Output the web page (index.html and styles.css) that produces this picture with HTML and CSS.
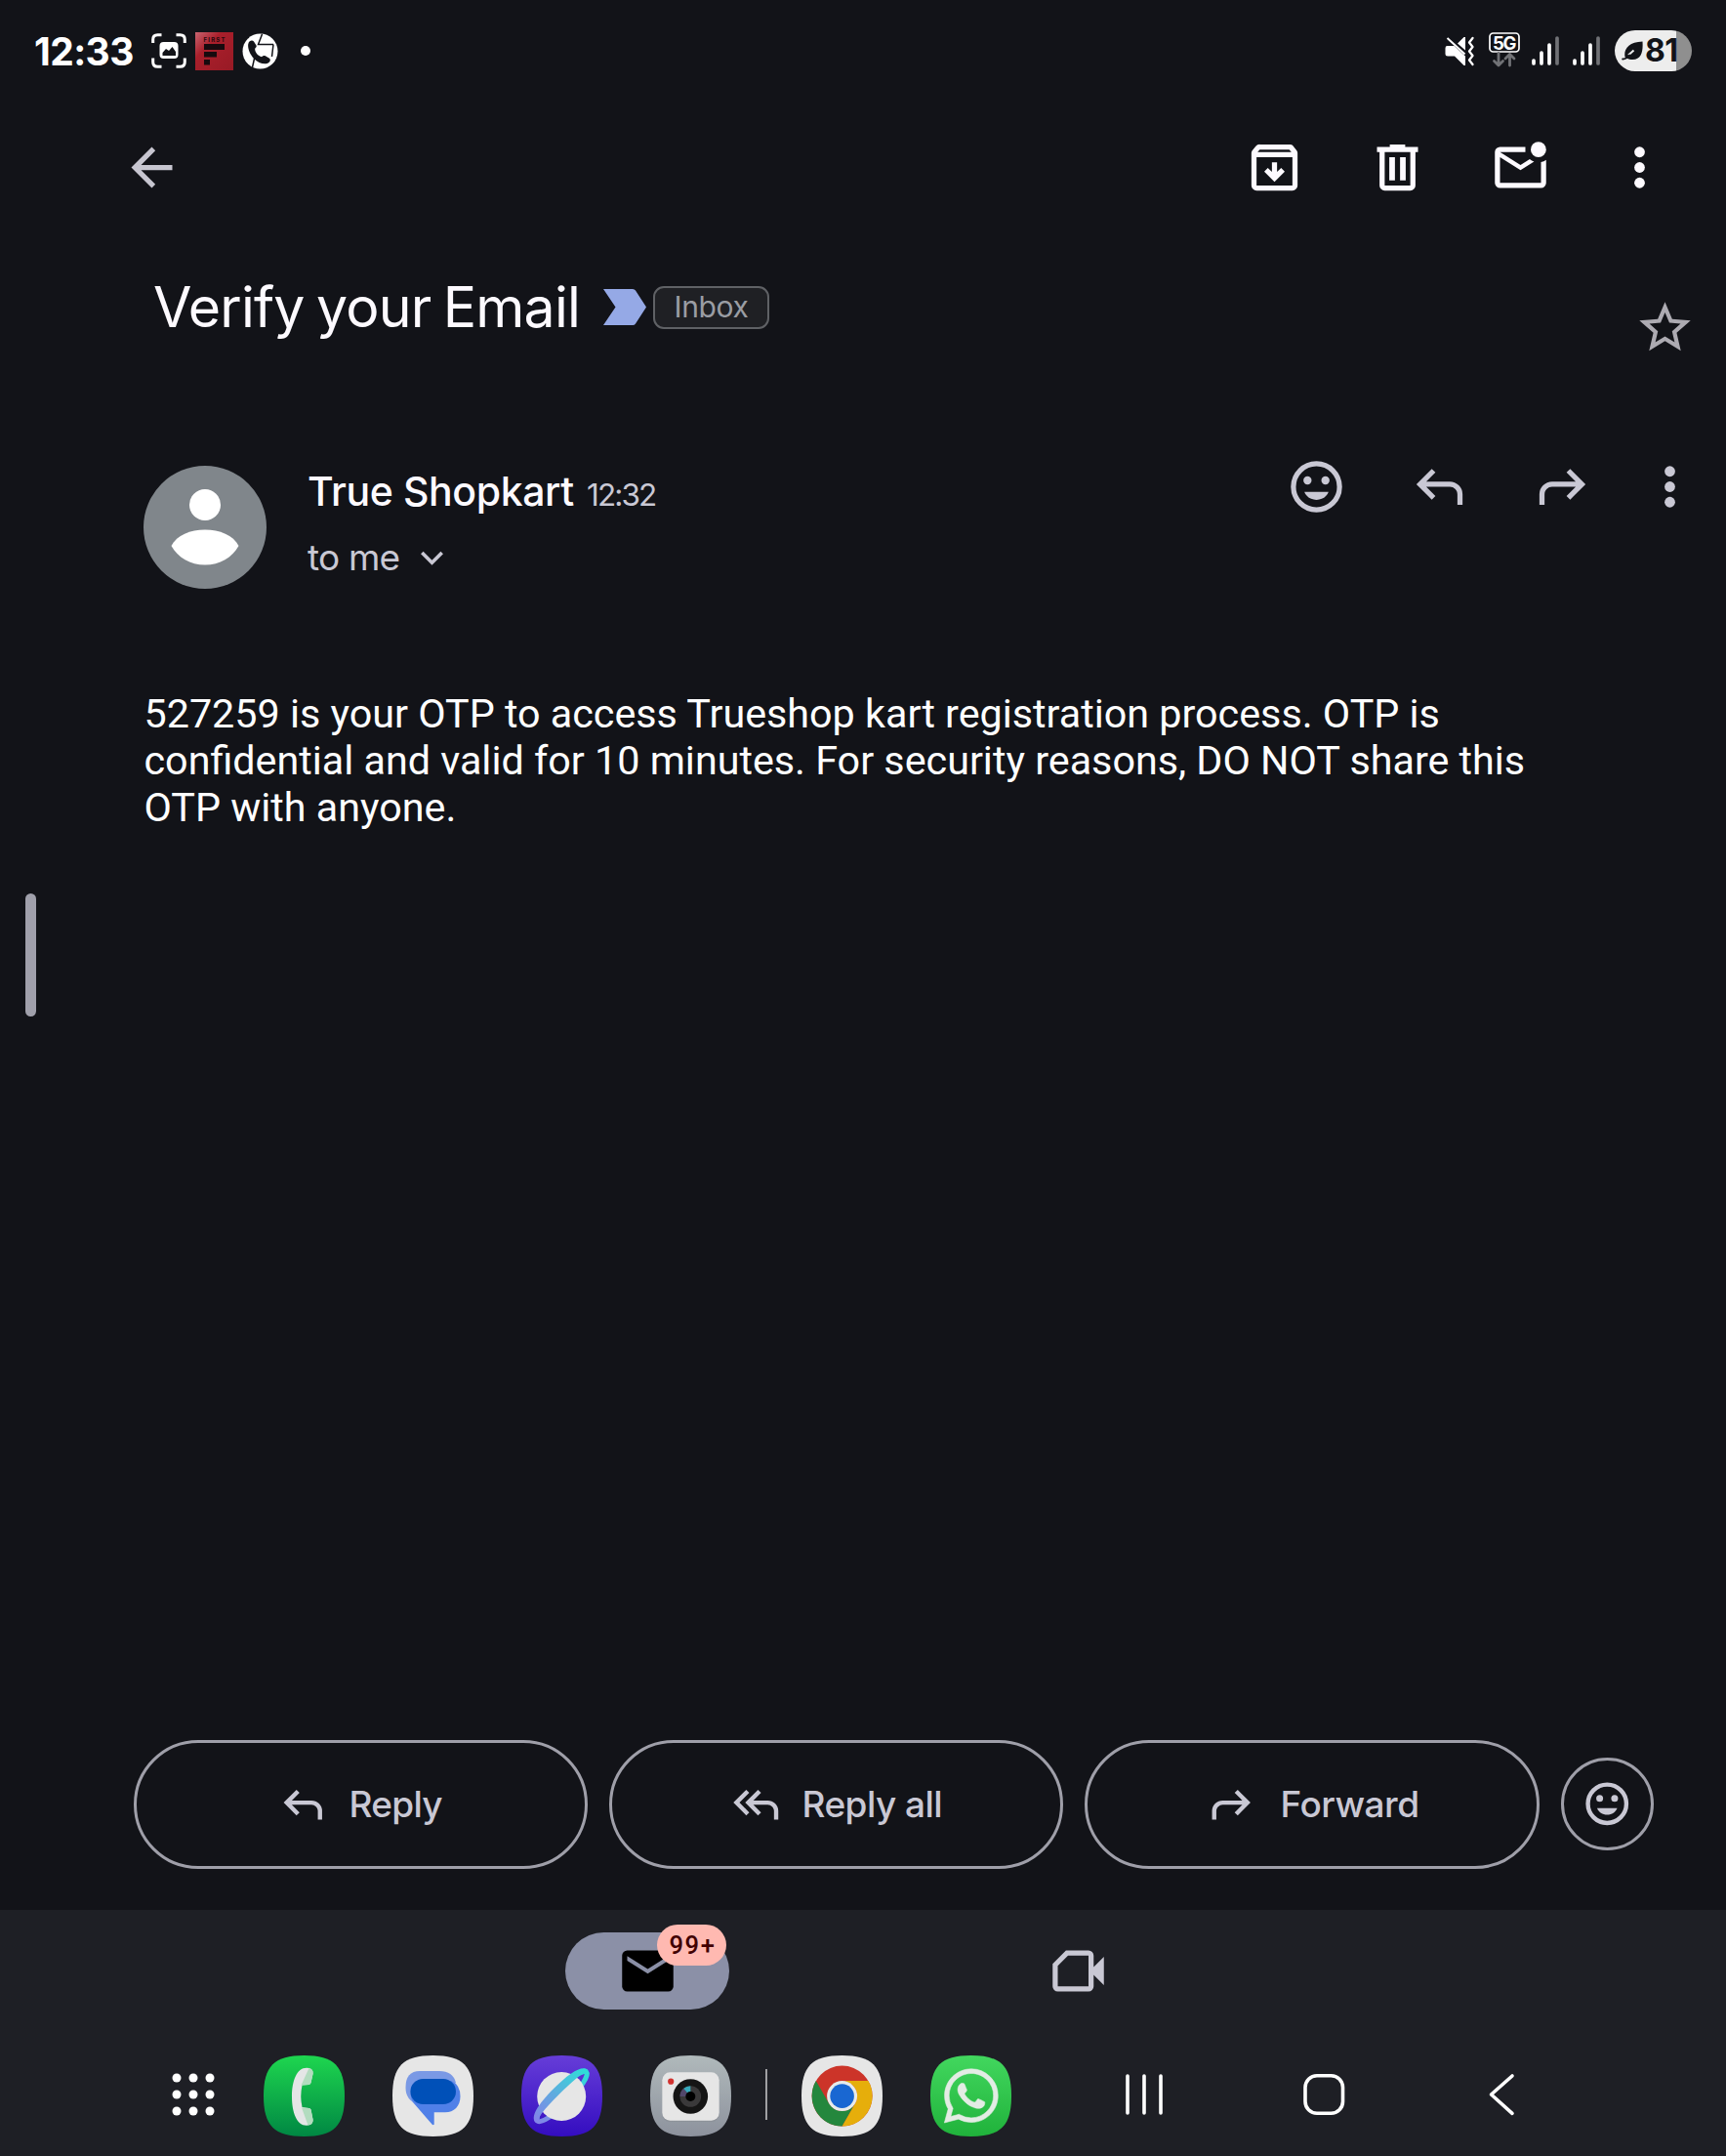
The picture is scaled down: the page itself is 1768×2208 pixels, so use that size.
FILE: index.html
```html
<!DOCTYPE html>
<html lang="en">
<head>
<meta charset="utf-8">
<title>Verify your Email</title>
<link rel="stylesheet" href="styles.css">
</head>
<body>
<svg class="defs" aria-hidden="true">
  <defs>
    <symbol id="i-reply" viewBox="0 0 24 24"><path d="M19 19v-4c0-.83-.29-1.54-.88-2.13A2.9 2.9 0 0 0 16 12H6.83l3.6 3.6L9 17l-6-6 6-6 1.43 1.4L6.83 10H16c1.38 0 2.56.49 3.54 1.46A4.82 4.82 0 0 1 21 15v4z"/></symbol>
    <symbol id="i-forward" viewBox="0 0 24 24"><path transform="matrix(-1 0 0 1 24 0)" d="M19 19v-4c0-.83-.29-1.54-.88-2.13A2.9 2.9 0 0 0 16 12H6.83l3.6 3.6L9 17l-6-6 6-6 1.43 1.4L6.83 10H16c1.38 0 2.56.49 3.54 1.46A4.82 4.82 0 0 1 21 15v4z"/></symbol>
    <symbol id="i-smile" viewBox="0 0 24 24"><circle cx="12" cy="12" r="9" fill="none" stroke="currentColor" stroke-width="2"/><circle cx="8.5" cy="9.5" r="1.6"/><circle cx="15.5" cy="9.5" r="1.6"/><path d="M7.3 14h9.4c-.7 1.9-2.5 3.1-4.7 3.1S8 15.9 7.3 14z"/></symbol>
    <symbol id="i-more" viewBox="0 0 24 24"><circle cx="12" cy="6" r="2.05"/><circle cx="12" cy="12" r="2.05"/><circle cx="12" cy="18" r="2.05"/></symbol>
    <symbol id="squircle" viewBox="0 0 83 83"><path d="M41.5 0C72 0 83 11 83 41.5S72 83 41.5 83 0 72 0 41.5 11 0 41.5 0Z"/></symbol>
    <linearGradient id="g-phone" x1="0" y1="0" x2="0" y2="1"><stop offset="0" stop-color="#1ed64f"/><stop offset="1" stop-color="#008743"/></linearGradient>
    <linearGradient id="g-net" x1="0" y1="0" x2="0" y2="1"><stop offset="0" stop-color="#663dd8"/><stop offset="1" stop-color="#340dc0"/></linearGradient>
    <linearGradient id="g-ring" gradientUnits="userSpaceOnUse" x1="76" y1="0" x2="6" y2="0"><stop offset="0" stop-color="#2fdcd8"/><stop offset=".5" stop-color="#5bb0de"/><stop offset="1" stop-color="#8284e8"/></linearGradient>
    <linearGradient id="g-cam" x1="0" y1="0" x2="0" y2="1"><stop offset="0" stop-color="#b0b9bb"/><stop offset="1" stop-color="#8d929d"/></linearGradient>
    <linearGradient id="g-wa" x1="0" y1="0" x2="0" y2="1"><stop offset="0" stop-color="#42d75e"/><stop offset="1" stop-color="#20b23b"/></linearGradient>
    <linearGradient id="g-red" x1="0" y1="0" x2="1" y2="1"><stop offset="0" stop-color="#c96470"/><stop offset=".35" stop-color="#a91f2b"/><stop offset="1" stop-color="#981a25"/></linearGradient>
  </defs>
</svg>

<div class="screen">
  <header class="status">
    <span class="clock">12:33</span>
    <svg class="s-shot" viewBox="0 0 36 36"><g fill="none" stroke="#fff" stroke-width="3" stroke-linecap="butt"><path d="M1.7 10V6.500Q1.700 1.700 6.500 1.700H10.500M25.500 1.700H29.500Q34.300 1.700 34.300 6.500V10M34.300 25.500V29.500Q34.300 34.300 29.500 34.300H25.500M10.500 34.300H6.500Q1.700 34.300 1.700 29.500V25.500"/></g><rect x="8.500" y="9" width="19" height="17" rx="4" fill="#fff"/><path d="M11.500 23v-3l3.500-4 3 2 3.500-4 3.500 5v4z" fill="#121318"/></svg>
    <svg class="s-first" viewBox="0 0 39 39"><path fill="url(#g-red)" d="M0 0h39v39H0z"/><text x="8.500" y="9.500" textLength="22">FIRST</text><path fill="#170a0e" d="M9 12h21v6H9zM9 20h13v5.500H9zM9 28h6v5.500H9z"/></svg>
    <svg class="s-call" viewBox="0 0 37 37"><circle cx="18.500" cy="18.500" r="18" fill="#fff"/><path d="M20.500 1l-4 10.500H32M32 11.500L30.500 24M12.500 26L10.500 35" fill="none" stroke="#121318" stroke-width="1.500"/><path d="M7.500 8.500c1.800-1.500 3.500-1.300 4.500 0l2.500 4c.6 1.200-.2 2.300-1.300 3.200-.4 3.500 3 7.600 6.800 8.600 1.300-1.300 2.600-1.800 3.800-1.100l4.200 2.600c1.200.9 1 2.600-.3 3.900-3.500 3.300-10.700 1.300-15.700-3.800S4.300 12 7.500 8.500z" fill="#121318"/></svg>
    <i class="s-dot"></i>
    <div class="status-right">
      <svg class="s-mute" viewBox="0 0 31 31"><path fill="#fff" d="M2 10h7.500L21 20.500V30h-1.500L10 20.500H3Q.5 20.500.5 18v-5.500Q.5 10 2 10zM13 7.500L19.500 1H21v13.500z"/><path d="M2.500 2l18 16.500" stroke="#fff" stroke-width="2"/><path d="M28.500 2l-3.500 4.500 3.500 4.500-3.500 4.500 3.500 4.500-3.500 4.500 3.500 4.500" fill="none" stroke="#fff" stroke-width="2.300" stroke-linecap="round" stroke-linejoin="round"/></svg>
      <svg class="s-5g" viewBox="0 0 32 36"><rect x="1" y="1" width="30" height="19" rx="3.500" fill="none" stroke="#fff" stroke-width="1.700"/><text x="4" y="17.500" textLength="24.500">5G</text><path d="M10 21.500v12M5.500 29.500l4.500 4.500 4.500-4.500M21.500 34v-11M17 27l4.500-4.500 4.500 4.500" fill="none" stroke="#717276" stroke-width="2.800" stroke-linecap="round" stroke-linejoin="round"/></svg>
      <svg class="s-sig" viewBox="0 0 28 30"><path d="M2 25v3M10 17v11M18 9v19" stroke="#fff" stroke-width="3.700" stroke-linecap="round"/><path d="M26 2v26" stroke="#717276" stroke-width="3.700" stroke-linecap="round"/></svg>
      <svg class="s-sig" viewBox="0 0 28 30"><path d="M2 25v3M10 17v11M18 9v19" stroke="#fff" stroke-width="3.700" stroke-linecap="round"/><path d="M26 2v26" stroke="#717276" stroke-width="3.700" stroke-linecap="round"/></svg>
      <div class="battery"><svg viewBox="0 0 22 20"><path d="M3.500 16.500C2 8.500 7 1 21.500.5c.7 10-1 18.500-10 18.500-2.500 0-4.500-.3-6-1.500z" fill="#121318"/><path d="M12.500 9.500L7 14.500" stroke="#ededed" stroke-width="2"/><path d="M1.200 18.500c3 0 5-1.500 7-4" stroke="#121318" stroke-width="2" fill="none" stroke-linecap="round"/></svg><span>81</span></div>
    </div>
  </header>

  <nav class="toolbar">
    <svg class="ic back" viewBox="0 0 24 24"><path d="M4 12l8-8 1.400 1.400L7.830 11H20v2H7.830l5.570 5.600L12 20z"/></svg>
    <div class="tools">
      <span><svg class="ic" viewBox="0 0 24 24"><path d="M12 17.600l4-4-1.400-1.400-1.600 1.550V10h-2v3.750L9.400 12.200 8 13.600zM5 8v11h14V8zM5 21a2 2 0 0 1-2-2V6.530c0-.24.04-.47.110-.68.080-.21.190-.41.340-.59L4.700 3.730A1.900 1.900 0 0 1 6.250 3h11.500c.32 0 .61.060.890.190.280.130.510.310.710.540l1.200 1.520c.150.180.26.380.34.59.070.21.110.44.110.68V19a2 2 0 0 1-2 2zM5.400 6h13.200l-.85-1H6.250z"/></svg></span>
      <span><svg class="ic" viewBox="0 0 24 24"><path d="M7 21a2 2 0 0 1-2-2V6H4V4h5V3h6v1h5v2h-1v13a2 2 0 0 1-2 2zM17 6H7v13h10zM8.800 17h2.200V8H8.800zM13 17h2.200V8H13z"/></svg></span>
      <span><svg class="ic" viewBox="0 0 24 24"><path d="M4 20a2 2 0 0 1-2-2V6a2 2 0 0 1 2-2h9.900v2H4l8 5 3.600-2.250a5.300 5.300 0 0 0 1.700 1L12 13 4 8v10h16V9.900a4.800 4.800 0 0 0 2-.9v9a2 2 0 0 1-2 2z"/><circle cx="19" cy="5" r="3"/></svg></span>
      <span class="last"><svg class="ic" viewBox="0 0 24 24"><use href="#i-more"/></svg></span>
    </div>
  </nav>

  <section class="subject">
    <h1>Verify your Email</h1>
    <svg class="important" viewBox="0 0 44 37"><path d="M0 0H30Q32 0 33 1.500L44 18.500 33 35.500Q32 37 30 37H0L12.500 18.500z"/></svg>
    <span class="chip">Inbox</span>
    <svg class="ic star" viewBox="0 0 24 24"><path d="M22 9.240l-7.190-.62L12 2 9.190 8.630 2 9.240l5.460 4.730L5.820 21 12 17.270 18.180 21l-1.630-7.030zM12 15.400l-3.760 2.270 1-4.280-3.320-2.880 4.380-.38L12 6.100l1.710 4.040 4.380.38-3.320 2.880 1 4.280z"/></svg>
  </section>

  <section class="sender">
    <svg class="avatar" viewBox="0 0 126 126"><circle cx="63" cy="63" r="63" fill="#80868b"/><circle cx="63" cy="40" r="16" fill="#fff"/><path d="M28.500 82C34 71 48 65.500 63 65.500S92 71 97.500 82C91 94 78 101.500 63 101.500S35 94 28.500 82z" fill="#fff"/></svg>
    <div class="who">
      <div class="name-row"><b>True Shopkart</b><time>12:32</time></div>
      <div class="to-row"><span>to me</span><svg viewBox="0 0 23 15"><path d="M1.300 2l10.200 10.200L21.700 2" fill="none" stroke="currentColor" stroke-width="3.600"/></svg></div>
    </div>
    <div class="msg-tools">
      <span><svg class="ic" viewBox="0 0 24 24"><use href="#i-smile"/></svg></span>
      <span><svg class="ic" viewBox="0 0 24 24"><use href="#i-reply"/></svg></span>
      <span><svg class="ic" viewBox="0 0 24 24"><use href="#i-forward"/></svg></span>
      <span class="last"><svg class="ic" viewBox="0 0 24 24"><use href="#i-more"/></svg></span>
    </div>
  </section>

  <main class="message">527259 is your OTP to access Trueshop kart registration process. OTP is<br>confidential and valid for 10 minutes. For security reasons, DO NOT share this<br>OTP with anyone.</main>
  <div class="edge-handle"></div>

  <div class="actions">
    <button class="pill"><svg class="ic sm" viewBox="0 0 24 24"><use href="#i-reply"/></svg><span>Reply</span></button>
    <button class="pill all"><svg class="ic sm" viewBox="0 0 24 24"><path d="M7.500 17l-6-6 6-6 1.400 1.400L4.330 11l4.570 4.600zM20.500 19v-4c0-.83-.29-1.540-.88-2.130A2.900 2.900 0 0 0 17.500 12H10.830l3.600 3.600L13 17l-6-6 6-6 1.430 1.400L10.830 10h6.670c1.380 0 2.560.49 3.540 1.460A4.820 4.820 0 0 1 22.500 15v4z"/></svg><span>Reply all</span></button>
    <button class="pill fwd"><svg class="ic sm" viewBox="0 0 24 24"><use href="#i-forward"/></svg><span>Forward</span></button>
    <button class="react"><svg class="ic sm" viewBox="0 0 24 24"><use href="#i-smile"/></svg></button>
  </div>

  <footer class="bottom">
    <div class="tabs">
      <div class="tab-mail"><svg class="ic" viewBox="0 0 24 24"><path fill="#000" d="M4 4h16a2 2 0 0 1 2 2v12a2 2 0 0 1-2 2H4a2 2 0 0 1-2-2V6a2 2 0 0 1 2-2z"/><path fill="#8b90a7" d="M4 6.200l8 5 8-5V8l-8 5-8-5z"/></svg><span class="badge">99+</span></div>
      <svg class="ic meet" viewBox="0 0 24 24"><path fill-rule="evenodd" d="M7.200 4H16a2 2 0 0 1 2 2v4.500l4-4v11l-4-4V18a2 2 0 0 1-2 2H4a2 2 0 0 1-2-2V9.200zM8 6L4 10v8h12V6z"/></svg>
    </div>
    <div class="taskbar">
      <svg class="apps" viewBox="0 0 44 44"><circle cx="5" cy="5" r="4.500"/><circle cx="22" cy="5" r="4.500"/><circle cx="39" cy="5" r="4.500"/><circle cx="5" cy="22" r="4.500"/><circle cx="22" cy="22" r="4.500"/><circle cx="39" cy="22" r="4.500"/><circle cx="5" cy="39" r="4.500"/><circle cx="22" cy="39" r="4.500"/><circle cx="39" cy="39" r="4.500"/></svg>
      <svg class="app a1" viewBox="0 0 83 83"><use href="#squircle" fill="url(#g-phone)"/><path fill="#e5e6e6" d="M44 12.700C34 12.700 29 26 29 42.200S34 71.700 44 71.700Q51 71.700 50.600 66L48.500 55.500Q48 54 46.500 54L39.500 53Q37 42 39.500 30.500L46.500 30Q48 29.500 48.500 28L50.600 18.500Q51 12.700 44 12.700z"/><path fill="#b3dcbf" d="M46.500 13Q51 14 50.600 18.500L48.500 28Q48 29.500 46.500 30L38.500 30.500zM39 53.500L46.500 54Q48 54 48.500 55.500L50.600 66Q50.500 70.500 45.500 71.500z"/></svg>
      <svg class="app a2" viewBox="0 0 83 83"><use href="#squircle" fill="#e6e6e6"/><path fill="#7a99e5" d="M28 16H48Q62 16 65 28L26 50Q13.500 46 13.500 33Q13.500 16 28 16z"/><path fill="#5080e8" d="M60 26Q69.500 30 69.500 42C69.500 52 63 58.300 54 58.300H42.700V70.500Q42 72 40.500 70.500L21 48Q18 42 19 38z"/><rect x="18.400" y="24" width="46.600" height="26" rx="13" fill="#0050b8"/></svg>
      <svg class="app a3" viewBox="0 0 83 83"><use href="#squircle" fill="url(#g-net)"/><ellipse cx="41.500" cy="42" rx="35.500" ry="8" transform="rotate(-45 41.500 42)" fill="none" stroke="url(#g-ring)" stroke-width="5"/><circle cx="41.200" cy="42" r="25" fill="#e6e6e6"/><path transform="rotate(-45 41.500 42)" d="M3.500 42C3.500 34 18 30.500 41.500 30.500S79.500 34 79.500 42H73.500C73.500 39.500 60 38.500 41.500 38.500S9.500 39.500 9.500 42z" fill="url(#g-ring)"/></svg>
      <svg class="app a4" viewBox="0 0 83 83"><use href="#squircle" fill="url(#g-cam)"/><rect x="12.300" y="18" width="58.400" height="50" rx="8" fill="#888c92" opacity=".5"/><rect x="12.300" y="17.300" width="58.400" height="49.400" rx="8" fill="#e6e6e6"/><circle cx="41.300" cy="42" r="17.800" fill="#151515"/><circle cx="41.300" cy="42" r="10.800" fill="#3a393a"/><path d="M41.300 31.200A10.800 10.800 0 0 0 34 34L41.300 42z" fill="#36a9bb"/><path d="M34 34A10.800 10.800 0 0 0 30.500 42H41.300z" fill="#51476a"/><circle cx="41.300" cy="42" r="5" fill="#000"/><circle cx="21.200" cy="26.700" r="3.100" fill="#d2322f"/></svg>
      <i class="divider"></i>
      <svg class="app a5" viewBox="0 0 83 83"><use href="#squircle" fill="#e6e6e6"/><circle cx="41.600" cy="41.600" r="31" fill="#cc3429"/><path fill="#24873d" d="M14.800 26.100L28.200 49.350A15.500 15.500 0 0 0 55 49.350L41.600 72.600A31 31 0 0 1 14.800 26.100z"/><path fill="#e6ae0b" d="M68.400 26.100H41.600A15.500 15.500 0 0 1 55 49.350L41.600 72.600A31 31 0 0 0 68.400 26.100z"/><circle cx="41.600" cy="41.600" r="15.500" fill="#e8ebea"/><circle cx="41.600" cy="41.600" r="12.300" fill="#1967d2"/></svg>
      <svg class="app a6" viewBox="0 0 83 83"><use href="#squircle" fill="url(#g-wa)"/><path transform="translate(14.200 13.800) scale(2.300)" fill="#e3ece4" stroke="#e3ece4" stroke-width=".25" d="M17.472 14.382c-.297-.149-1.758-.867-2.030-.967-.273-.099-.471-.148-.67.150-.197.297-.767.966-.940 1.164-.173.199-.347.223-.644.075-.297-.150-1.255-.463-2.390-1.475-.883-.788-1.480-1.761-1.653-2.059-.173-.297-.018-.458.130-.606.134-.133.298-.347.446-.520.149-.174.198-.298.298-.497.099-.198.050-.371-.025-.520-.075-.149-.669-1.612-.916-2.207-.242-.579-.487-.5-.669-.510-.173-.008-.371-.010-.570-.010-.198 0-.520.074-.792.372-.272.297-1.040 1.016-1.040 2.479 0 1.462 1.065 2.875 1.213 3.074.149.198 2.096 3.200 5.077 4.487.709.306 1.262.489 1.694.625.712.227 1.360.195 1.871.118.571-.085 1.758-.719 2.006-1.413.248-.694.248-1.289.173-1.413-.074-.124-.272-.198-.570-.347m-5.421 7.403h-.004a9.870 9.870 0 0 1-5.031-1.378l-.361-.214-3.741.982.998-3.648-.235-.374a9.860 9.860 0 0 1-1.510-5.260c.001-5.450 4.436-9.884 9.888-9.884 2.640 0 5.122 1.030 6.988 2.898a9.825 9.825 0 0 1 2.893 6.994c-.003 5.450-4.437 9.884-9.885 9.884m8.413-18.297A11.815 11.815 0 0 0 12.050 0C5.495 0 .160 5.335.157 11.892c0 2.096.547 4.142 1.588 5.945L.057 24l6.305-1.654a11.882 11.882 0 0 0 5.683 1.448h.005c6.554 0 11.890-5.335 11.893-11.893a11.821 11.821 0 0 0-3.480-8.413z"/></svg>
      <svg class="recents" viewBox="0 0 40 42"><path d="M3 2v38M20 2v38M37 2v38" stroke="#fff" stroke-width="3.600" stroke-linecap="round"/></svg>
      <svg class="home" viewBox="0 0 44 44"><rect x="3" y="2.800" width="38.500" height="38.500" rx="12" fill="none" stroke="#fff" stroke-width="3.600"/></svg>
      <svg class="sysback" viewBox="0 0 28 44"><path d="M25 3L3.500 22 25 41.300" fill="none" stroke="#fff" stroke-width="3.600" stroke-linecap="round" stroke-linejoin="round"/></svg>
    </div>
  </footer>
</div>
</body>
</html>
```
FILE: styles.css
```css
* { box-sizing: border-box; }
body { margin: 0; background: #121318; }
.defs { position: absolute; width: 0; height: 0; }
svg { display: block; flex: none; fill: currentColor; }
.screen {
  position: relative;
  display: flex;
  flex-direction: column;
  width: 1768px;
  height: 2208px;
  overflow: hidden;
  color: #c9c8d4;
  font-family: Inter, "Open Sans", sans-serif;
}
.ic { width: 63px; height: 63px; }
.ic.sm { width: 52.5px; height: 52.5px; }

/* status bar */
.status { display: flex; align-items: center; height: 104px; padding: 0 35px 0 35px; }
.clock { width: 120px; color: #fff; font-size: 39px; font-weight: 700; letter-spacing: -0.6px; line-height: 1; white-space: nowrap; }
.s-shot { width: 36px; height: 36px; }
.s-first { width: 39px; height: 39px; margin-left: 9px; }
.s-first text { fill: #26090e; font: 700 6px Inter, sans-serif; }
.s-call { width: 37px; height: 37px; margin-left: 9px; }
.s-dot { width: 10px; height: 10px; margin-left: 23px; border-radius: 50%; background: #fff; }
.status-right { display: flex; align-items: center; margin-left: auto; }
.s-mute { width: 31px; height: 31px; }
.s-5g { width: 32px; height: 36px; margin: -2px 0 0 14px; }
.s-5g text { fill: #fff; font: 700 18.5px Inter, sans-serif; }
.s-sig { width: 28px; height: 30px; margin-left: 12px; }
.s-sig + .s-sig { margin-left: 14px; }
.battery {
  display: flex;
  align-items: center;
  width: 79px;
  height: 42px;
  margin-left: 15px;
  padding-left: 7px;
  border-radius: 21px;
  background: linear-gradient(90deg, #ededed 63px, #8f8f8f 63px);
  color: #121318;
}
.battery svg { width: 22px; height: 20px; }
.battery span { margin-left: 2px; font-size: 32px; font-weight: 700; letter-spacing: -0.5px; line-height: 42px; }

/* toolbar */
.toolbar { display: flex; align-items: center; justify-content: space-between; height: 136px; padding: 0 30px 1px 123.5px; }
.back { color: #c7c6d0; }
.tools, .msg-tools { display: flex; color: #fdfaff; }
.tools span, .msg-tools span { display: flex; justify-content: center; width: 126px; }
.tools .last { width: 118px; }

/* subject */
.subject { display: flex; align-items: center; height: 150px; padding: 0 31px 0 157px; }
.subject h1 { width: 461px; margin: 0 0 1px; color: #fdfaff; font-size: 57.200px; font-weight: 400; letter-spacing: -0.8px; word-spacing: -3px; line-height: 70px; white-space: nowrap; }
.important { width: 44px; height: 37px; margin-top: -1px; color: #95a9e6; }
.chip {
  width: 119px;
  height: 44px;
  margin-left: 7px;
  border: 2px solid #5f6165;
  border-radius: 11px;
  background: #1f2024;
  color: #9a9da3;
  font-size: 30px;
  letter-spacing: -0.4px;
  line-height: 39px;
  text-align: center;
}
.star { margin: 41px 0 0 auto; color: #adabb2; }

/* sender */
.sender { display: flex; height: 213px; margin-top: 87px; padding: 0 0 0 147px; }
.avatar { width: 126px; height: 126px; }
.who { margin-left: 42px; }
.name-row { display: flex; align-items: baseline; height: 69px; line-height: 52px; white-space: nowrap; }
.name-row b { width: 286px; color: #fdfaff; font-size: 41px; font-weight: 500; letter-spacing: -0.4px; }
.name-row time { font-size: 31.5px; letter-spacing: -1.9px; }
.to-row { display: flex; align-items: center; font-size: 37px; letter-spacing: -0.8px; line-height: 50px; }
.to-row span { width: 116px; }
.to-row svg { width: 23px; height: 15px; }
.msg-tools { margin: -10px 0 0 auto; padding-right: 10px; color: #c9c8d4; }
.msg-tools .last { width: 95px; }

/* message */
.message { padding: 17px 0 0 147.500px; color: #fff; font: 400 41.280px/48px Roboto, sans-serif; white-space: nowrap; }
.edge-handle { position: absolute; left: 26px; top: 915px; width: 11px; height: 126px; border-radius: 5.500px; background: #a0a0ab; }

/* reply actions */
.actions { display: flex; align-items: center; gap: 22px; height: 132px; margin: auto 0 42px 137px; }
.pill, .react { display: flex; align-items: center; padding: 0; border: 3px solid #9f9fa9; background: none; color: inherit; font-family: inherit; }
.pill { width: 465px; height: 132px; padding-left: 144px; border-radius: 66px; font-size: 37px; font-weight: 500; letter-spacing: -0.7px; white-space: nowrap; }
.pill span { margin: 0 0 2px 21px; }
.pill.all { padding-left: 121px; }
.pill.all span { margin-left: 21px; letter-spacing: -0.55px; }
.pill.fwd { width: 466px; padding-left: 121px; }
.pill.fwd span { margin-left: 24px; letter-spacing: -0.5px; }
.react { justify-content: center; width: 95px; height: 95px; margin-bottom: 1px; border-radius: 50%; }

/* bottom bar */
.bottom { height: 252px; background: #1e1f25; }
.tabs { display: flex; align-items: center; height: 125px; padding-left: 579px; }
.tab-mail { position: relative; display: flex; align-items: center; justify-content: center; width: 168px; height: 79px; border-radius: 40px; background: #8b90a7; }
.badge {
  position: absolute;
  left: 94px;
  top: -8px;
  width: 71px;
  height: 42px;
  border-radius: 21px;
  background: #ffb9b1;
  color: #410002;
  font: 500 25.500px/42px Roboto, sans-serif;
  letter-spacing: 1.700px;
  text-align: center;
  text-indent: 2px;
}
.meet { margin-left: 326px; }
.taskbar { display: flex; align-items: center; height: 127px; padding: 1px 0 0 176px; }
.apps { width: 44px; height: 44px; fill: #fff; }
.app { width: 83px; height: 83px; margin: 2px 0 0 49px; }
.app.a1 { margin-left: 50px; }
.divider { width: 2px; height: 52px; margin-left: 35px; background: #a0a0a3; }
.app.a5 { margin-left: 35px; }
.app.a6 { margin-left: 49px; }
.recents { width: 40px; height: 42px; margin-left: 116px; }
.home { width: 44px; height: 44px; margin-left: 142px; }
.sysback { width: 28px; height: 44px; margin-left: 146px; }
```
